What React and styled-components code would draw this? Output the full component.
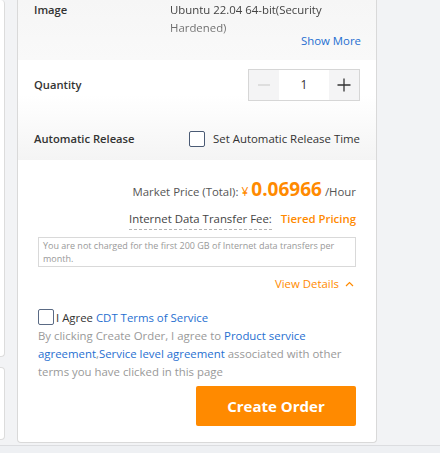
import React, { useState } from "react";
import styled, { createGlobalStyle } from "styled-components";

const GlobalStyle = createGlobalStyle`
  html, body {
    margin: 0;
    padding: 0;
    background: #f2f3f5;
    font-family: "Open Sans", "Noto Sans", Arial, sans-serif;
    -webkit-font-smoothing: antialiased;
  }
  * { box-sizing: border-box; }
`;

const Page = styled.div`
  width: 440px;
  height: 453px;
  overflow: hidden;
  display: flex;
  flex-direction: column;
`;

const Body = styled.div`
  display: flex;
  gap: 12px;
  height: 444px;
`;

const SideColumn = styled.div`
  width: 5px;
  display: flex;
  flex-direction: column;
  gap: 10px;
`;

const SidePanel = styled.div`
  height: ${(p) => p.$h}px;
  background: #fff;
  border: 1px solid #dcdcdc;
  border-left: 0;
  border-top: ${(p) => (p.$top ? "1px solid #dcdcdc" : "0")};
  border-radius: 0 4px 4px 0;
`;

const Card = styled.div`
  width: 360px;
  height: 443px;
  background: #fff;
  border: 1px solid #d9d9d9;
  border-top: 0;
  border-radius: 0 0 4px 4px;
  display: flex;
  flex-direction: column;
  overflow: hidden;
`;

const ImageSection = styled.div`
  height: 60px;
  background: linear-gradient(#f6f6f6, #f9f9f9);
  padding: 1px 16px 0 16px;
  display: flex;
  flex-direction: column;
`;

const Row = styled.div`
  display: flex;
  align-items: ${(p) => p.$align || "center"};
  justify-content: space-between;
`;

const Label = styled.div`
  font-size: 11.2px;
  font-weight: 600;
  color: #333;
  line-height: 18px;
`;

const ImageValue = styled.div`
  width: 190px;
  font-size: 11.4px;
  line-height: 18px;
  color: #444;
  -webkit-mask-image: linear-gradient(#000 45%, rgba(0, 0, 0, 0.55));
  mask-image: linear-gradient(#000 45%, rgba(0, 0, 0, 0.55));
`;

const LinkText = styled.a`
  color: #1f6fd1;
  text-decoration: none;
  cursor: pointer;
`;

const ShowMore = styled(LinkText)`
  align-self: flex-end;
  font-size: 11.4px;
  line-height: 16px;
  margin-top: -4px;
  margin-right: -1px;
`;

const ConfigSection = styled.div`
  height: 101px;
  background: linear-gradient(#ffffff 35%, #f4f4f4);
  padding: 9px 16px 0 16px;
  display: flex;
  flex-direction: column;
  gap: 29px;
`;

const Stepper = styled.div`
  display: flex;
  height: 32px;
  border: 1px solid #d6d6d6;
`;

const StepButton = styled.button`
  width: 30px;
  border: 0;
  padding: 0;
  background: #f4f4f5;
  display: flex;
  align-items: center;
  justify-content: center;
  cursor: pointer;
`;

const StepValue = styled.div`
  width: 50px;
  background: #fff;
  display: flex;
  align-items: center;
  justify-content: center;
  font-size: 12px;
  color: #333;
`;

const CheckLabel = styled.label`
  display: flex;
  align-items: center;
  gap: ${(p) => p.$gap || 8}px;
  font-size: 11.4px;
  color: #333;
  cursor: pointer;
`;

const Box = styled.span`
  width: 16px;
  height: 16px;
  border: 1px solid ${(p) => (p.$dark ? "#4a5a74" : "#5a6a84")};
  border-radius: 2px;
  background: #fff;
  flex-shrink: 0;
`;

const PriceSection = styled.div`
  flex: 1;
  padding: 16px 20px 16px 20px;
  display: flex;
  flex-direction: column;
`;

const PriceLine = styled.div`
  display: flex;
  align-items: baseline;
  justify-content: flex-end;
  font-size: 11.4px;
  color: #555;
  gap: 2px;
`;

const Yen = styled.span`
  color: #ff8a00;
  font-size: 12px;
  margin-left: 1px;
`;

const Amount = styled.span`
  color: #ff8a00;
  font-size: 19px;
  font-weight: 700;
  margin: 0 1px;
`;

const FeeLine = styled.div`
  display: flex;
  align-items: baseline;
  justify-content: flex-end;
  gap: 9px;
  margin-top: 9px;
  font-size: 11.4px;
`;

const Dashed = styled.span`
  color: #444;
  padding-bottom: 3px;
  border-bottom: 1px dashed #b5b5b5;
`;

const Tiered = styled.span`
  color: #ff8a00;
  font-weight: 600;
`;

const NoteBox = styled.div`
  margin-top: 7px;
  border: 1px solid #d9d9d9;
  padding: 1px 4px 1px 4px;
  font-size: 9px;
  line-height: 13px;
  color: #999;
`;

const ViewDetails = styled.div`
  align-self: flex-end;
  margin-top: 9px;
  margin-right: 2px;
  display: flex;
  align-items: center;
  gap: 6px;
  font-size: 11.4px;
  color: #ff8a00;
  cursor: pointer;
`;

const Agreement = styled.div`
  margin-top: 18px;
  display: flex;
  flex-direction: column;
`;

const AgreeText = styled.span`
  color: #333;
`;

const Terms = styled.p`
  margin: 2px 0 0 0;
  font-size: 11.4px;
  line-height: 18px;
  color: #999;
  width: 318px;
`;

const CreateButton = styled.button`
  align-self: flex-end;
  margin-top: 5px;
  width: 160px;
  height: 40px;
  border: 0;
  border-radius: 2px;
  background: #ff8a00;
  color: #fff;
  font-family: inherit;
  font-size: 15px;
  font-weight: 700;
  cursor: pointer;
`;

const Footer = styled.div`
  height: 9px;
  border-top: 1px solid #dcdde0;
  margin-top: 2px;
  background: #eef0f3;
`;

const Minus = () => (
  <svg width="16" height="16" viewBox="0 0 16 16">
    <path d="M2 8h12" stroke="#c8c8c8" strokeWidth="1.2" />
  </svg>
);

const Plus = () => (
  <svg width="16" height="16" viewBox="0 0 16 16">
    <path d="M1.5 8h13M8 1.5v13" stroke="#333" strokeWidth="1.3" />
  </svg>
);

const ChevronUp = () => (
  <svg width="9" height="6" viewBox="0 0 9 6">
    <path d="M1 5l3.5-3.5L8 5" stroke="#ff8a00" strokeWidth="1.2" fill="none" />
  </svg>
);

export default function App() {
  const [qty, setQty] = useState(1);

  return (
    <Page>
      <GlobalStyle />
      <Body>
        <SideColumn>
          <SidePanel $h={357} />
          <SidePanel $h={73} $top />
        </SideColumn>
        <Card>
          <ImageSection>
            <Row $align="flex-start">
              <Label>Image</Label>
              <ImageValue>Ubuntu 22.04 64-bit(Security Hardened)</ImageValue>
            </Row>
            <ShowMore>Show More</ShowMore>
          </ImageSection>

          <ConfigSection>
            <Row>
              <Label>Quantity</Label>
              <Stepper>
                <StepButton onClick={() => setQty(Math.max(1, qty - 1))}>
                  <Minus />
                </StepButton>
                <StepValue>{qty}</StepValue>
                <StepButton onClick={() => setQty(qty + 1)}>
                  <Plus />
                </StepButton>
              </Stepper>
            </Row>
            <Row>
              <Label>Automatic Release</Label>
              <CheckLabel>
                <Box $dark />
                Set Automatic Release Time
              </CheckLabel>
            </Row>
          </ConfigSection>

          <PriceSection>
            <PriceLine>
              Market Price (Total):
              <Yen>¥</Yen>
              <Amount>0.06966</Amount>
              /Hour
            </PriceLine>
            <FeeLine>
              <Dashed>Internet Data Transfer Fee:</Dashed>
              <Tiered>Tiered Pricing</Tiered>
            </FeeLine>
            <NoteBox>
              You are not charged for the first 200 GB of Internet data transfers per month.
            </NoteBox>
            <ViewDetails>
              View Details <ChevronUp />
            </ViewDetails>

            <Agreement>
              <CheckLabel $gap={2}>
                <Box />
                <span>
                  <AgreeText>I Agree </AgreeText>
                  <LinkText>CDT Terms of Service</LinkText>
                </span>
              </CheckLabel>
              <Terms>
                By clicking Create Order, I agree to{" "}
                <LinkText>Product service agreement</LinkText>,
                <LinkText>Service level agreement</LinkText> associated with other terms you
                have clicked in this page
              </Terms>
            </Agreement>
            <CreateButton>Create Order</CreateButton>
          </PriceSection>
        </Card>
      </Body>
      <Footer />
    </Page>
  );
}
